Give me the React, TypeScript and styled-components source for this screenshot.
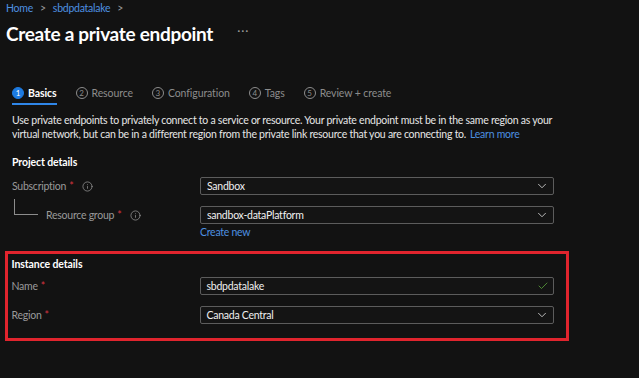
import React from 'react';
import styled, { createGlobalStyle } from 'styled-components';
import { ChevronDown, Check, Info } from 'lucide-react';

const GlobalStyle = createGlobalStyle`
  html, body {
    margin: 0;
    padding: 0;
    background: #121212;
  }
  body {
    font-family: Lato, "Noto Sans", sans-serif;
    color: #e6e6e6;
    letter-spacing: -0.25px;
  }
`;

const Page = styled.div`
  width: 639px;
  height: 378px;
  overflow: hidden;
  background: #121212;
`;

const Breadcrumb = styled.nav`
  display: flex;
  align-items: center;
  gap: 7px;
  height: 16px;
  padding-left: 6px;
  font-size: 10.5px;
  color: #4d90e0;

  span.sep {
    color: #9a9a9a;
  }
`;

const TitleRow = styled.div`
  display: flex;
  align-items: center;
  gap: 24px;
  height: 26px;
  margin-top: 4px;
  padding-left: 6px;
`;

const Title = styled.h1`
  margin: 0;
  font-size: 19px;
  font-weight: 700;
  letter-spacing: -0.3px;
  color: #ffffff;
`;

const More = styled.span`
  font-size: 12px;
  color: #9a9a9a;
  letter-spacing: 1px;
  padding-bottom: 6px;
`;

const Tabs = styled.div`
  display: flex;
  gap: 19px;
  margin-top: 38px;
  padding-left: 12px;
`;

const Tab = styled.div<{ $active?: boolean }>`
  display: flex;
  align-items: center;
  gap: 4px;
  height: 17px;
  padding-bottom: 2px;
  border-bottom: 2px solid ${p => (p.$active ? '#2f86e8' : 'transparent')};
  font-size: 10.5px;
  letter-spacing: -0.1px;
  font-weight: ${p => (p.$active ? 700 : 400)};
  color: ${p => (p.$active ? '#ffffff' : '#8c8c8c')};
`;

const StepNum = styled.span<{ $active?: boolean }>`
  width: 12px;
  height: 12px;
  box-sizing: border-box;
  border-radius: 50%;
  display: flex;
  align-items: center;
  justify-content: center;
  font-size: 8px;
  font-weight: 400;
  letter-spacing: 0;
  color: ${p => (p.$active ? '#ffffff' : '#8c8c8c')};
  background: ${p => (p.$active ? '#1d7ae0' : 'transparent')};
  border: 1px solid ${p => (p.$active ? '#1d7ae0' : '#8c8c8c')};
`;

const Description = styled.p`
  margin: 8px 0 0;
  padding-left: 12px;
  width: 548px;
  font-size: 10.5px;
  line-height: 14px;
  color: #e6e6e6;

  a {
    color: #4d90e0;
    text-decoration: none;
    margin-left: 4px;
  }
`;

const SectionTitle = styled.h2`
  margin: 0;
  height: 16px;
  font-size: 10.5px;
  font-weight: 700;
  letter-spacing: -0.1px;
  color: #ffffff;
  display: flex;
  align-items: center;
`;

const Project = styled.div`
  padding-left: 12px;
  margin-top: 13px;
`;

const Row = styled.div<{ $gap?: number }>`
  display: grid;
  grid-template-columns: 188px 354px;
  align-items: center;
  margin-top: ${p => p.$gap ?? 12}px;
`;

const Label = styled.div<{ $indent?: boolean }>`
  position: relative;
  display: flex;
  align-items: center;
  gap: 3px;
  font-size: 10.5px;
  color: #9a9a9a;
  padding-left: ${p => (p.$indent ? '34px' : '0')};

  ${p =>
    p.$indent &&
    `
    &::before {
      content: '';
      position: absolute;
      left: 2px;
      top: -10px;
      width: 23px;
      height: 15px;
      border-left: 1px solid #8c8c8c;
      border-bottom: 1px solid #8c8c8c;
    }
  `}
`;

const Required = styled.span`
  color: #d4323f;
  margin-right: 6px;
`;

const Field = styled.div`
  display: flex;
  align-items: center;
  justify-content: space-between;
  height: 18px;
  box-sizing: border-box;
  border: 1px solid #5c5c5c;
  border-radius: 2px;
  background: #141414;
  padding: 0 4px 0 6px;
  font-size: 10.5px;
  color: #f0f0f0;
`;

const CreateNew = styled.a`
  color: #4d90e0;
  font-size: 10.5px;
  margin-top: 1px;
  line-height: 14px;
`;

const Highlight = styled.section`
  width: 564px;
  box-sizing: border-box;
  margin: 12px 0 0 5px;
  border: 3.5px solid #e0242d;
  padding: 2px 0 14px 3.5px;
`;

const InfoIcon = () => <Info size={11} color="#9a9a9a" strokeWidth={1.6} />;

export default function App() {
  return (
    <Page>
      <GlobalStyle />
      <Breadcrumb>
        <span>Home</span>
        <span className="sep">&gt;</span>
        <span>sbdpdatalake</span>
        <span className="sep">&gt;</span>
      </Breadcrumb>

      <TitleRow>
        <Title>Create a private endpoint</Title>
        <More>···</More>
      </TitleRow>

      <Tabs>
        <Tab $active>
          <StepNum $active>1</StepNum>Basics
        </Tab>
        <Tab>
          <StepNum>2</StepNum>Resource
        </Tab>
        <Tab>
          <StepNum>3</StepNum>Configuration
        </Tab>
        <Tab>
          <StepNum>4</StepNum>Tags
        </Tab>
        <Tab>
          <StepNum>5</StepNum>Review + create
        </Tab>
      </Tabs>

      <Description>
        Use private endpoints to privately connect to a service or resource. Your private endpoint must be in the same region as your
        virtual network, but can be in a different region from the private link resource that you are connecting to.<a>Learn more</a>
      </Description>

      <Project>
        <SectionTitle>Project details</SectionTitle>
        <Row $gap={7}>
          <Label>
            Subscription<Required>*</Required>
            <InfoIcon />
          </Label>
          <Field>
            Sandbox
            <ChevronDown size={14} color="#d0d0d0" strokeWidth={1.5} />
          </Field>
        </Row>
        <Row $gap={11}>
          <Label $indent>
            Resource group<Required>*</Required>
            <InfoIcon />
          </Label>
          <Field>
            sandbox-dataPlatform
            <ChevronDown size={14} color="#d0d0d0" strokeWidth={1.5} />
          </Field>
        </Row>
        <Row $gap={0}>
          <span />
          <CreateNew>Create new</CreateNew>
        </Row>
      </Project>

      <Highlight>
        <SectionTitle>Instance details</SectionTitle>
        <Row $gap={5}>
          <Label>
            Name<Required>*</Required>
          </Label>
          <Field>
            sbdpdatalake
            <Check size={12} color="#5ca33c" strokeWidth={1.6} />
          </Field>
        </Row>
        <Row $gap={11}>
          <Label>
            Region<Required>*</Required>
          </Label>
          <Field>
            Canada Central
            <ChevronDown size={14} color="#d0d0d0" strokeWidth={1.5} />
          </Field>
        </Row>
      </Highlight>
    </Page>
  );
}
